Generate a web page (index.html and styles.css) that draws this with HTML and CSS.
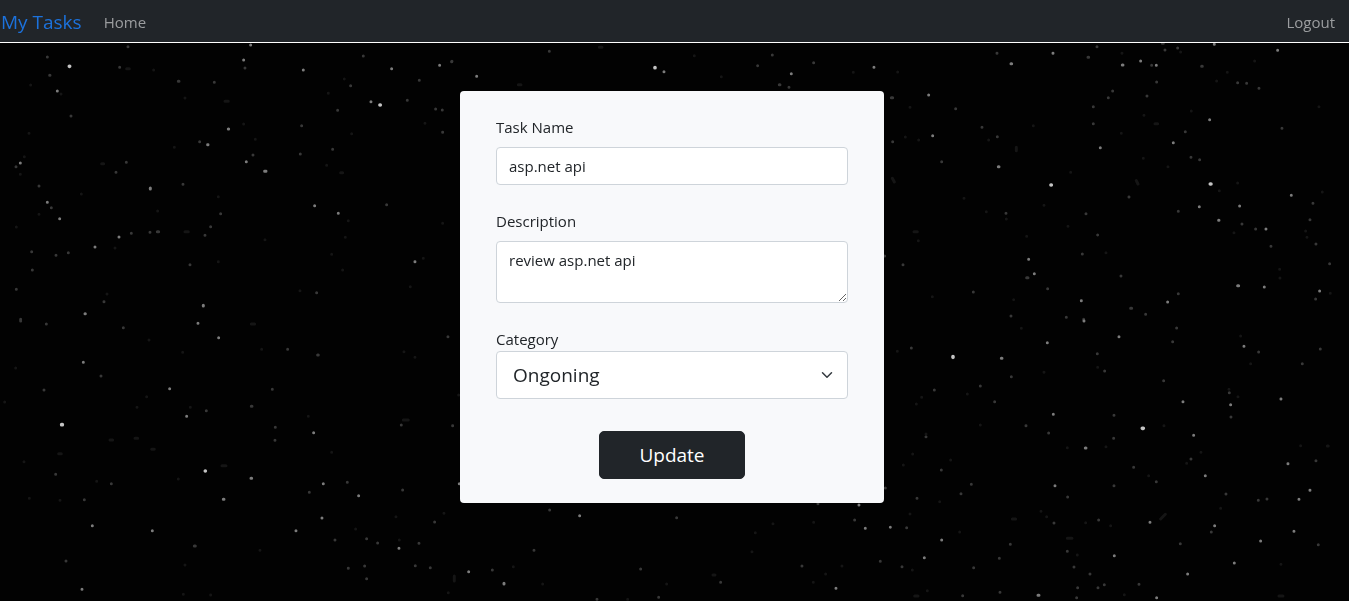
FILE: index.html
```html
<!DOCTYPE html>
<html lang="en">
<head>
<meta charset="utf-8">
<meta name="viewport" content="width=device-width, initial-scale=1">
<title>My Tasks</title>
<link rel="stylesheet" href="styles.css">
</head>
<body>
<svg class="sky" viewBox="0 43 1349 558" preserveAspectRatio="xMidYMin slice" aria-hidden="true">
  <!-- upper left -->
  <g transform="translate(0 40) scale(.3333)">
    <path class="star star-bright" d="M208 79h1M1140 195h1"/>
    <path class="star star-mid" d="M172 153h0M685 267h1M739 365h0M794 394h4M623 314h1M1113 185h0M1175 86h0M1319 76h0M752 15h0M731 60h0M910 90h0M610 796v2M1015 520h0M451 444v3M255 821h1M1245 665h0M61 369h0M142 487h0M357 591h0M179 536h0M285 621h0M944 497h0"/>
    <path class="star star-dim" d="M149 106h1M359 82h0M384 20h0M142 51h0M535 124h2M643 127h0M735 84h0M1090 48h0M1258 121h0M1356 64h0M1222 181h0M1052 137h0M1307 207h0M1327 210h0M1328 277h0M1013 211h0M905 257h0M901 342h0M998 328h0M759 345h0M599 305h0M348 397h0M379 367h0M48 380h0M117 438h0M154 503h0M549 433h0M1160 494h0M472 575h4M450 577h0M662 521h0M632 560h0M615 586h0M205 638h0M97 690h0M570 674h0M312 785h0M950 758h0M49 748h0M62 838h0M95 635h0M168 646h0M213 228h0M394 580h0"/>
    <path class="star star-faint" d="M92 135h0M461 90h0M380 86h8M183 162h0M87 280h0M73 350h0M61 403h0M117 523h0M49 561h0M244 462h0M305 371h6M523 322h0M555 174h0M731 252h0M766 298h0M675 184h10M1033 117h0M1055 281h0M985 160h0M980 376h0M1022 398h6M1045 542h0M1036 592h0M795 599h0M655 665h0M473 513h0M995 643h0M1028 690h0M1270 655h0M1231 740h0M900 752h0M345 624h0M321 762h0M555 575h10M655 470h0M1328 550h0M1275 250h0"/>
  </g>
  <!-- lower left -->
  <g transform="translate(0 320) scale(.3333)">
    <path class="star star-bright" d="M185 314h2M616 453h0"/>
    <path class="star star-mid" d="M250 127h0M656 53h0M560 289h0M670 538h2M246 808h0M753 475h2M277 617h0M594 10h0M941 338h0M1197 685h0M970 491h0M1076 527h0M457 632h0M888 632h0M509 206h0M1378 491h0M966 594h0"/>
    <path class="star star-dim" d="M370 23h0M303 168h0M132 210h0M863 88h0M953 105h2M1344 50h0M817 208h0M754 259h2M619 272h0M826 322h0M825 361h0M1042 487h0M928 517h0M1208 510h0M334 491h0M253 539h0M583 678h3M198 723h0M1005 660h0M1133 669h0M1100 656h0M1257 670h0M1304 606h0M1246 737h0M1045 745h0M1094 738h0M1291 743h0M1100 776h0M1204 315h0M1358 317h0M167 463h0M62 3h0M139 12h0"/>
    <path class="star star-faint" d="M447 60h0M548 97h0M47 144h0M754 12h10M14 246h0M72 425h0M176 401h8M330 360h8M180 541h0M88 535h0M440 230h0M411 262h0M571 262h0M535 477h0M290 484h0M785 88h0M1245 112h0M925 289h0M995 397h0M1212 95h0M1376 225h0M1332 580h0M1067 627h0M1198 660h0M1345 818h0M632 825h0M550 823h0M555 735h0M780 691h0M666 437h12M405 355h8M455 388h8M1210 300h15M1188 590h0M1363 768v15"/>
  </g>
  <!-- above the form -->
  <g transform="translate(450 40) scale(.3333)">
    <path class="star star-bright" d="M615 83h0"/>
    <path class="star star-mid" d="M642 95h0M80 109h0M1272 82h0M1024 101h0"/>
    <path class="star star-dim" d="M298 34h0M923 77h0M967 45h0M1091 68h0M988 134h2M1017 142h0M5 65h0"/>
    <path class="star star-faint" d="M448 22h8M733 47h0M814 110h0M1210 97h0M205 134h8"/>
  </g>
  <!-- below the form -->
  <g transform="translate(450 500) scale(.3333)">
    <path class="star star-mid" d="M56 215h0M162 250v2M1158 265h0M1246 85h0M1227 15h0M389 47h0"/>
    <path class="star star-dim" d="M299 30h0M127 210h0M252 151h0M572 207h0M812 247h0M1056 198h0M1291 184h0M1214 60h0M626 292h0M441 298h0M680 53h0M1104 11h0"/>
    <path class="star star-faint" d="M190 200h0M278 252h0M906 155h0M969 71h0M916 98h0M789 225h6M1090 247h0M1127 222h0M1091 67h0M1176 198h0M533 298h0M650 252h0"/>
  </g>
  <!-- upper right -->
  <g transform="translate(884 40) scale(.3333)">
    <path class="star star-bright" d="M501 435h1M979 432h2"/>
    <path class="star star-mid" d="M507 40h0M381 71h2M715 75h2M817 76h0M770 63h0M991 13h0M1181 31h0M977 239h0M649 323h0M343 380h2M146 287h0M1004 541h1M1146 567h0M1067 498h0M1222 466h0M434 658h0M1141 741h0M851 786h0M134 165h0M868 308h0M946 500h0M451 701h0M592 782h0M1061 737h3M1307 753h0"/>
    <path class="star star-dim" d="M22 173h4M215 206h0M26 305h0M173 365h0M294 262h0M340 290h0M339 40h0M612 52h2M639 20h0M843 30h0M881 24h0M803 76h0M835 10h3M953 79h2M818 126h0M686 153h0M673 173h0M628 200h0M628 251h0M789 168h0M904 275h0M921 352h0M947 359h0M1061 128h0M1088 130h0M1125 145h0M1194 265h0M735 471h0M883 514h0M366 520h0M606 521h0M641 585h0M595 642h0M1115 567h0M1074 552h0M1296 612h0M1278 539h0M1161 619h0M1337 671h0M57 674h0M2 648h0M268 756h0M491 746h0M428 713h4M711 708h0M740 805h3M785 823h0M883 761h0M1295 777h0M381 828h0M547 832h0M599 838h0M1287 490h0"/>
    <path class="star star-faint" d="M41 96h0M714 40h0M890 36h0M64 291h0M104 300h0M78 202h0M448 257h0M314 300h0M397 322v10M560 397h0M780 226h0M813 251h8M922 213h0M1030 97h0M998 123h0M1112 63h0M778 355h0M757 422l5 10M1315 456h0M1265 573h0M1269 592h0M1050 578h0M1006 452h0M552 559h0M480 496h0M307 515h0M367 537h0M103 602h0M240 475h0M90 575h10M428 589h0M666 638h0M145 770h0M389 779h0M1188 714h0M1187 688h0M1339 760h0M1061 429h0M25 415l6 11M1305 200h0M712 280h0M852 380h0"/>
  </g>
  <!-- lower right -->
  <g transform="translate(884 320) scale(.3333)">
    <path class="star star-bright" d="M207 110v2M775 325h3"/>
    <path class="star star-mid" d="M352 115h2M490 68h0M600 3h0M705 50h0M1080 79h0M1191 237h0M1212 431h0M1040 254h0M929 346h0M897 245h0M604 384h2M513 497h0M798 607h0M992 617h0M1130 663h0M1230 634h0M1245 538h0M1278 511h0M691 707h0M911 762h0M1051 729h0M462 826h3M818 833h0M121 713h0M173 660h0M19 622h0M508 283h0M964 467h0"/>
    <path class="star star-dim" d="M82 84h0M382 170h0M289 198h0M332 245h0M151 210h0M640 101h0M662 153h0M866 65h0M878 24h0M1124 96h0M1255 131h0M1309 87h0M839 182h0M1036 218h0M1041 291h0M690 286h0M689 355h0M494 339h0M426 317h0M126 350h0M172 450h0M262 493h0M231 521h0M99 535h0M4 504h0M551 531h0M690 497h0M749 442h0M817 485h0M921 417h0M1026 522h0M1123 541h0M1149 537h0M1296 422h0M982 636h0M889 671h0M510 609h0M550 694h0M570 741h0M379 673h0M346 715h0M269 743h0M54 740h0M68 623h0M348 817h0M236 827h0M618 762h0M661 794h0M642 803h0M581 803h0M578 833h0M765 793h0M1303 674h0M644 600h0"/>
    <path class="star star-faint" d="M40 94h0M113 232h0M97 252h0M250 222h0M289 315h0M480 157h0M86 402h0M58 435h0M200 420h0M167 545h0M78 582h0M227 636h0M85 750h0M130 812h0M471 574h0M488 590h0M605 608h0M830 597l14-14M794 467h0M840 317h0M550 383h0M951 397h0M1100 131h0M1070 48h0M1250 377h0M908 430h0M680 617h0M550 655h14M412 25h0M385 597h10M1062 230h0M1010 565h0M92 828h10M1185 828h12M126 342h0M641 142h0M666 380h0M1035 208h0M1330 378h3M1191 733h0M721 824h0M580 705h0"/>
  </g>
</svg>

<header class="navbar">
  <a class="navbar-brand" href="#">My Tasks</a>
  <nav class="navbar-links" aria-label="Main">
    <a class="nav-link" href="#">Home</a>
    <a class="nav-link" href="#">Logout</a>
  </nav>
</header>

<main class="page">
  <form class="card">
    <div class="field">
      <label for="name">Task Name</label>
      <input class="control" id="name" type="text" value="asp.net api">
    </div>
    <div class="field">
      <label for="description">Description</label>
      <textarea class="control" id="description" rows="2">review asp.net api</textarea>
    </div>
    <div class="field field-tight">
      <label for="category">Category</label>
      <div class="select-wrap">
        <select class="control control-large" id="category">
          <option>Ongoning</option>
        </select>
        <svg class="chevron" viewBox="0 0 16 16" aria-hidden="true"><path d="M2 5l6 6 6-6"/></svg>
      </div>
    </div>
    <button class="submit" type="button">Update</button>
  </form>
</main>
</body>
</html>
```
FILE: styles.css
```css
*,
*::before,
*::after {
  box-sizing: border-box;
}

body {
  margin: 0;
  min-height: 100vh;
  background: #020202;
  color: #212529;
  font-family: "Segoe UI", "Open Sans", "Noto Sans", sans-serif;
  font-size: 15px;
  line-height: 24px;
}

/* Star field behind the whole page */
.sky {
  position: fixed;
  top: 43px;
  left: 0;
  z-index: -1;
  width: 100%;
  height: calc(100% - 43px);
}

.star {
  fill: none;
  stroke-linecap: round;
  stroke-linejoin: round;
}

.star-bright {
  stroke: #c4c4c4;
  stroke-width: 11;
}

.star-mid {
  stroke: #7c7c7c;
  stroke-width: 9;
}

.star-dim {
  stroke: #383838;
  stroke-width: 9;
}

.star-faint {
  stroke: #151515;
  stroke-width: 9;
}

.navbar {
  display: flex;
  align-items: center;
  gap: 22px;
  min-height: 43px;
  padding: 2px 14px 0 1px;
  border-bottom: 1px solid #fff;
  background: #212529;
}

.navbar-brand {
  color: #1c72dc;
  font-size: 19px;
  text-decoration: none;
}

.navbar-links {
  display: flex;
  flex: 1;
  justify-content: space-between;
}

.nav-link {
  color: #9b9d9f;
  text-decoration: none;
}

.page {
  padding: 48px 5px 48px 0;
}

.card {
  display: flex;
  flex-direction: column;
  gap: 24px;
  max-width: 424px;
  margin: 0 auto;
  padding: 24px 36px;
  border-radius: 4px;
  background: #f8f9fb;
}

.field {
  display: flex;
  flex-direction: column;
  gap: 8px;
}

.field-tight {
  gap: 0;
}

.control {
  display: block;
  width: 100%;
  margin: 0;
  padding: 6px 12px;
  border: 1px solid #ced4da;
  border-radius: 4px;
  background: #fff;
  color: #212529;
  font: inherit;
}

.select-wrap {
  display: grid;
  align-items: center;
}

.select-wrap > * {
  grid-area: 1 / 1;
}

.control-large {
  height: 48px;
  padding: 8px 48px 8px 16px;
  font-size: 19px;
  appearance: none;
}

.chevron {
  justify-self: end;
  width: 12px;
  height: 12px;
  margin-right: 15px;
  fill: none;
  stroke: #343a40;
  stroke-width: 2;
  stroke-linecap: round;
  stroke-linejoin: round;
  pointer-events: none;
}

.submit {
  align-self: center;
  margin-top: 8px;
  padding: 8px 39px;
  border: 1px solid #212529;
  border-radius: 5px;
  background: #212529;
  color: #fff;
  font: inherit;
  font-size: 19px;
  font-weight: 500;
  line-height: 30px;
}
```
